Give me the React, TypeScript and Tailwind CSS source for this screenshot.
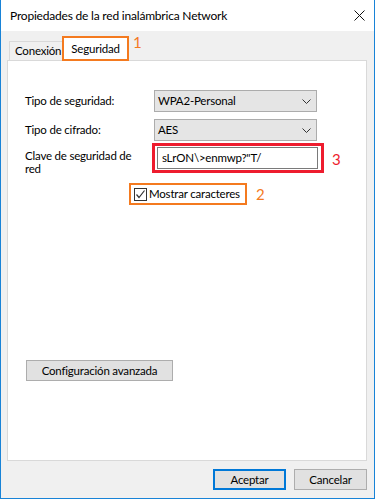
import { useState } from 'react';

function Chevron() {
  return (
    <svg width="9" height="5" viewBox="0 0 9 5" className="shrink-0">
      <path d="M0.5 0.5 L4.5 4.5 L8.5 0.5" fill="none" stroke="#333" strokeWidth="1" />
    </svg>
  );
}

function Select({ value }: { value: string }) {
  return (
    <div className="w-[163px] h-[22px] flex items-center justify-between bg-[#e5e5e5] border border-[#acacac] pl-[3px] pr-[5px]">
      <span>{value}</span>
      <Chevron />
    </div>
  );
}

export default function App() {
  const [show, setShow] = useState(true);

  return (
    <div className="w-[375px] h-[499px] flex flex-col border-x border-b border-[#1883d7] bg-[#f0f0f0] text-[11.5px] leading-[14px] tracking-[-0.2px] text-black font-['Lato','Noto_Sans',sans-serif]">
      {/* title bar */}
      <div className="h-[31px] shrink-0 bg-white flex items-center justify-between pl-[9px] pr-[9px]">
        <span className="text-[12px]">Propiedades de la red inalámbrica Network</span>
        <svg width="11" height="11" viewBox="0 0 11 11">
          <path d="M0.5 0.5 L10.5 10.5 M10.5 0.5 L0.5 10.5" stroke="#111" strokeWidth="1" />
        </svg>
      </div>

      <div className="flex-1 flex flex-col pl-[6px] pr-[7px] pt-[5px]">
        {/* tabs */}
        <div className="h-[24px] flex items-end">
          <div className="ml-[2px] w-[53px] h-[19px] border-t border-l border-[#d9d9d9] pl-[5px] flex items-center whitespace-nowrap">
            Conexión
          </div>
          <div className="relative z-10 -mb-px w-[67px] h-[25px] bg-white border-2 border-[#f47a1f] flex items-center justify-center">
            Seguridad
            <span className="absolute left-[69px] top-[-4px] text-[15px] leading-[16px] text-[#f47a1f]">1</span>
          </div>
        </div>

        {/* panel */}
        <div className="h-[401px] bg-white border border-[#d9d9d9] pl-[17px] pt-[29px] flex flex-col">
          <div className="flex items-center">
            <span className="w-[129px]">Tipo de seguridad:</span>
            <Select value="WPA2-Personal" />
          </div>
          <div className="flex items-center mt-[7px]">
            <span className="w-[129px]">Tipo de cifrado:</span>
            <Select value="AES" />
          </div>
          <div className="flex items-start mt-[6px]">
            <span className="w-[114px] mr-[18px] pt-[2px] leading-[13px]">Clave de seguridad de red</span>
            <div className="relative w-[161px] h-[22px] border border-[#7a7a7a] bg-white pl-[4px] flex items-center">
              sLrON\&gt;enmwp?"T/
              <div className="absolute -left-[6px] -top-[5px] -right-[7px] -bottom-[5px] border-[3px] border-[#ee1c2e]" />
            </div>
            <span className="ml-[14px] mt-[4px] text-[15px] leading-[16px] text-[#ee1c2e]">3</span>
          </div>
          <div className="flex items-center ml-[104px] mt-[8px]">
            <label className="h-[22px] flex items-center border-2 border-[#f47a1f] pl-[3px] pr-[5px] gap-[2px]">
              <button
                type="button"
                onClick={() => setShow(!show)}
                className="w-[13px] h-[13px] border border-[#333] bg-white flex items-center justify-center"
              >
                {show && (
                  <svg width="11" height="11" viewBox="0 0 11 11">
                    <path d="M1.5 5.5 L4 8.5 L9.5 1.5" fill="none" stroke="#333" strokeWidth="1.2" />
                  </svg>
                )}
              </button>
              <span>Mostrar caracteres</span>
            </label>
            <span className="ml-[9px] text-[15px] leading-[16px] text-[#f47a1f]">2</span>
          </div>
          <button
            type="button"
            className="mt-[155px] ml-[1px] w-[147px] h-[21px] bg-[#e1e1e1] border border-[#adadad] flex items-center justify-center"
          >
            Configuración avanzada
          </button>
        </div>

        {/* footer buttons */}
        <div className="mt-[8px] flex justify-end gap-[8px]">
          <button type="button" className="w-[73px] h-[21px] bg-[#e1e1e1] border-2 border-[#0078d7] flex items-center justify-center">
            Aceptar
          </button>
          <button type="button" className="w-[73px] h-[21px] bg-[#e1e1e1] border border-[#adadad] flex items-center justify-center">
            Cancelar
          </button>
        </div>
      </div>
    </div>
  );
}
